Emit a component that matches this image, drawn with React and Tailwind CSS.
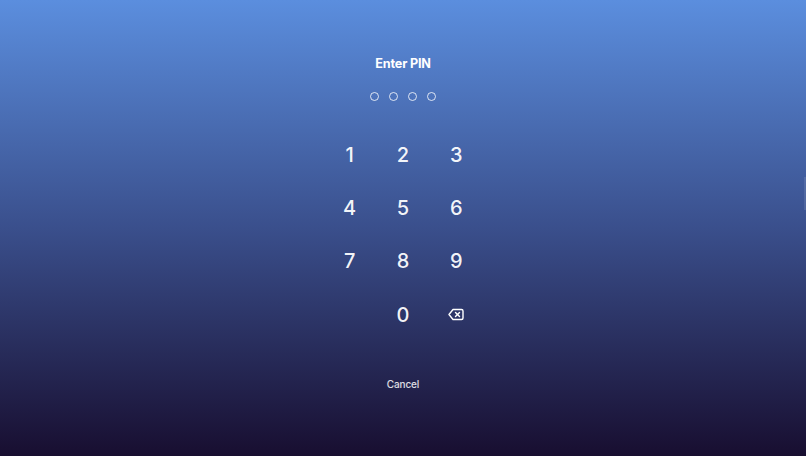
export default function App() {
  const keys = ["1", "2", "3", "4", "5", "6", "7", "8", "9"];
  const cell = "flex h-[53.33px] w-[53.33px] items-center justify-center text-[20px] leading-none font-medium text-white/95";
  return (
    <div className="relative flex h-[456px] w-[806px] flex-col items-center overflow-hidden bg-[linear-gradient(180deg,#5b8ede_0%,#3a4f8c_50%,#180e30_100%)] pt-[55px] font-['Inter',sans-serif]">
      <h1 className="h-[18px] text-[12.67px] leading-[18px] font-bold tracking-[-0.2px] text-white">Enter PIN</h1>
      <div className="mt-[19px] flex h-[9px] gap-[10.2px]">
        {[0, 1, 2, 3].map((i) => (
          <span key={i} className="h-[9px] w-[9px] rounded-full border border-white/80" />
        ))}
      </div>
      <div className="mt-[27px] grid grid-cols-[repeat(3,53.33px)]">
        {keys.map((k) => (
          <div key={k} className={cell}>{k}</div>
        ))}
        <div className={cell} />
        <div className={cell}>0</div>
        <div className={cell}>
          <svg className="-mt-px" width="16" height="13" viewBox="0 0 16 13" fill="none" stroke="white" strokeWidth="1.4" strokeLinecap="round" strokeLinejoin="round">
            <path d="M5 1.500h8.500a1.500 1.500 0 0 1 1.500 1.500v7a1.500 1.500 0 0 1-1.500 1.500H5L1 6.500z" />
            <path d="m11.500 4.500-4 4" />
            <path d="m7.500 4.500 4 4" />
          </svg>
        </div>
      </div>
      <div className="mt-[35px] text-[10px] leading-[16px] font-medium tracking-[-0.15px] text-white/85">Cancel</div>
      <div className="absolute top-[177px] right-0 h-[33px] w-[2px] bg-white/10" />
    </div>
  );
}
